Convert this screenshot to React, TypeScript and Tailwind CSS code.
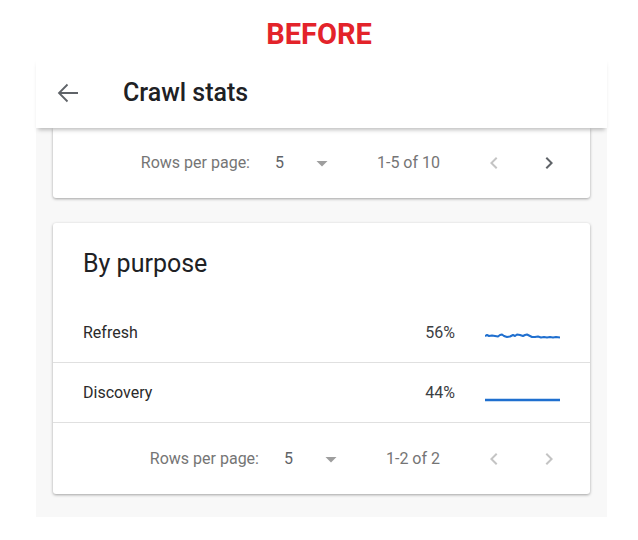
import React from "react";

const ChevronLeft = ({ className }: { className?: string }) => (
  <svg viewBox="0 0 24 24" width="24" height="24" className={className} fill="currentColor">
    <path d="M15.41 7.41L14 6l-6 6 6 6 1.41-1.41L10.83 12z" />
  </svg>
);
const ChevronRight = ({ className }: { className?: string }) => (
  <svg viewBox="0 0 24 24" width="24" height="24" className={className} fill="currentColor">
    <path d="M10 6L8.59 7.41 13.17 12l-4.58 4.59L10 18l6-6z" />
  </svg>
);
const DropDown = () => (
  <svg viewBox="0 0 24 24" width="24" height="24" className="text-[#9e9e9e]" fill="currentColor">
    <path d="M6.5 10l5.5 5.5 5.5-5.5z" />
  </svg>
);

function Pagination({ range, nextEnabled }: { range: string; nextEnabled: boolean }) {
  return (
    <div className="flex h-full items-center justify-end pr-[29px] text-[16px] text-[#757575]">
      <span>Rows per page:</span>
      <span className="ml-[25px] text-[#5f6368]">5</span>
      <span className="ml-[26px]">
        <DropDown />
      </span>
      <span className="ml-[43px]">{range}</span>
      <ChevronLeft className="ml-[42px] text-[#c4c4c4]" />
      <ChevronRight className={"ml-[31px] " + (nextEnabled ? "text-[#5f6368]" : "text-[#c4c4c4]")} />
    </div>
  );
}

const refreshPts =
  "0,14 2,13 4,14 7,13.5 10,14 13,14.5 15,13 17,12.5 19,14 22,15 25,14.5 28,13 30,14 32,12.5 35,13 38,14 40,13 42,12.5 44,13.5 47,15 50,15 53,14.5 56,15.5 59,15 62,15.5 65,15 68,15.5 71,15 75,15.5";

function Row({ label, pct, spark }: { label: string; pct: string; spark: "wave" | "flat" }) {
  return (
    <div className="flex h-[60px] items-center border-b border-[#e0e0e0] px-[30px] text-[16px]">
      <span className="flex-1 text-[#2b2b2b]">{label}</span>
      <span className="text-[#3c4043]">{pct}</span>
      <svg width="75" height="24" viewBox="0 0 75 24" className="ml-[30px] mt-[2px]">
        {spark === "wave" ? (
          <polyline points={refreshPts} fill="none" stroke="#1f6fcf" strokeWidth="2" strokeLinejoin="round" />
        ) : (
          <line x1="0" y1="18" x2="75" y2="18" stroke="#1f6fcf" strokeWidth="2.5" />
        )}
      </svg>
    </div>
  );
}

export default function App() {
  return (
    <div className="h-[540px] w-[638px] bg-white font-['Roboto',sans-serif]">
      <div className="flex h-[58px] items-center justify-center pt-[12px] text-[29px] font-bold text-[#e3232a]">
        BEFORE
      </div>
      <div className="ml-[36px] w-[571px]">
        <header className="relative z-10 flex h-[70px] items-center bg-white pl-[21px] shadow-[0_4px_4px_-2px_rgba(0,0,0,0.25)]">
          <svg viewBox="0 0 22 22" width="22" height="22" fill="none" stroke="#5f6368" strokeWidth="1.8">
            <path d="M21 11H2 M10.5 2.5L2 11l8.5 8.5" />
          </svg>
          <h1 className="ml-[44px] text-[25px] font-medium text-[#202124]">Crawl stats</h1>
        </header>
        <main className="bg-[#f8f8f8] px-[17px] pb-[23px]">
          <div className="h-[70px] rounded-b-[3px] bg-white shadow-[0_1px_3px_rgba(0,0,0,0.35)]">
            <Pagination range="1-5 of 10" nextEnabled />
          </div>
          <div className="mt-[25px] rounded-[3px] bg-white shadow-[0_1px_3px_rgba(0,0,0,0.35)]">
            <div className="h-[80px] pl-[30px] pt-[25px] text-[25px] leading-[32px] text-[#202124]">By purpose</div>
            <Row label="Refresh" pct="56%" spark="wave" />
            <Row label="Discovery" pct="44%" spark="flat" />
            <div className="h-[71px]">
              <Pagination range="1-2 of 2" nextEnabled={false} />
            </div>
          </div>
        </main>
      </div>
    </div>
  );
}
